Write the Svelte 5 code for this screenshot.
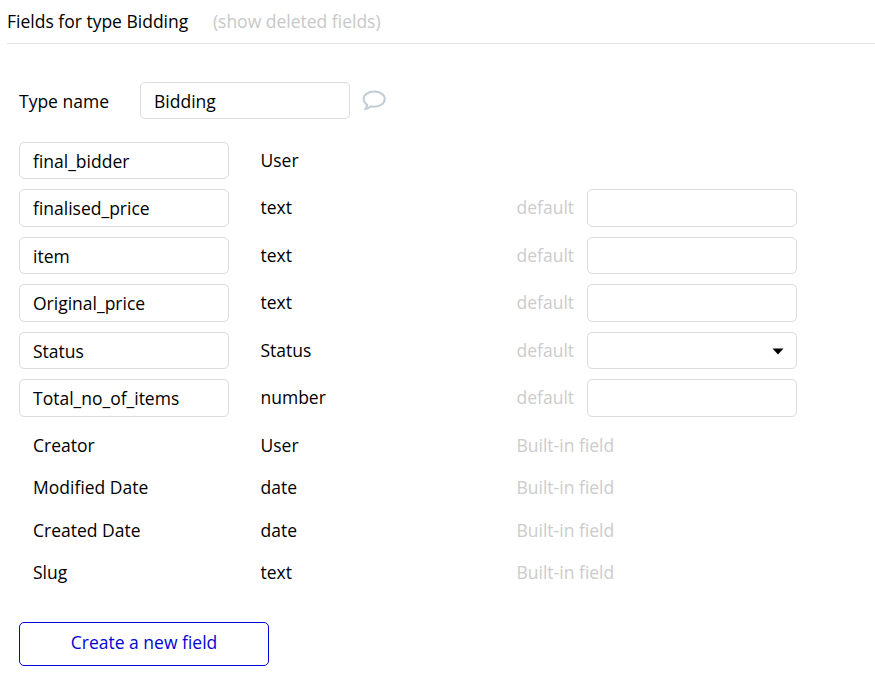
<script>
  const fields = [
    { name: 'final_bidder', type: 'User', control: 'none' },
    { name: 'finalised_price', type: 'text', control: 'text' },
    { name: 'item', type: 'text', control: 'text' },
    { name: 'Original_price', type: 'text', control: 'text' },
    { name: 'Status', type: 'Status', control: 'select' },
    { name: 'Total_no_of_items', type: 'number', control: 'text' }
  ];
  const builtIn = [
    { name: 'Creator', type: 'User' },
    { name: 'Modified Date', type: 'date' },
    { name: 'Created Date', type: 'date' },
    { name: 'Slug', type: 'text' }
  ];
</script>

<main>
  <header>
    <span class="title">Fields for type Bidding</span>
    <span class="muted">(show deleted fields)</span>
  </header>

  <div class="type-name">
    <span class="label">Type name</span>
    <div class="box">Bidding</div>
    <svg class="comment" width="24" height="21" viewBox="0 0 24 21" fill="none" stroke="#bfced6" stroke-width="2" stroke-linejoin="round">
      <path d="M12.200 1.500C6.300 1.500 1.700 4.700 1.700 9c0 2.400 1.400 4.400 3.600 5.800-.3 1.700-1.100 3.100-2.300 4.300 2.500-.2 4.400-1.200 6-2.800 1 .3 2.100.4 3.200.4 5.900 0 10.500-3.400 10.500-7.700S18.100 1.500 12.200 1.500Z" />
    </svg>
  </div>

  <div class="rows">
    {#each fields as field}
      <div class="row">
        <div class="box">{field.name}</div>
        <span class="type">{field.type}</span>
        {#if field.control !== 'none'}
          <span class="muted default">default</span>
          <div class="box value">
            {#if field.control === 'select'}
              <svg width="12" height="7" viewBox="0 0 12 7"><path d="M.5 .5h11L6 6.500Z" fill="#000" /></svg>
            {/if}
          </div>
        {/if}
      </div>
    {/each}
    {#each builtIn as field}
      <div class="row built-in">
        <span class="name">{field.name}</span>
        <span class="type">{field.type}</span>
        <span class="muted">Built-in field</span>
      </div>
    {/each}
  </div>

  <button>Create a new field</button>
</main>

<style>
  :global(body) { background: #fff; }
  main {
    box-sizing: border-box;
    width: 875px;
    height: 688px;
    overflow: hidden;
    font: 400 17.5px/24px 'Open Sans', 'Noto Sans', sans-serif;
    color: #000;
    white-space: nowrap;
  }
  header {
    box-sizing: border-box;
    display: flex;
    gap: 24.6px;
    height: 44px;
    margin-left: 7px;
    padding-top: 9px;
    border-bottom: 1px solid #e2e2e2;
  }
  .muted { color: #c8c8c8; }
  .row .muted { color: #ccc; }
  .box {
    box-sizing: border-box;
    display: flex;
    align-items: center;
    flex: none;
    width: 210px;
    height: 37.5px;
    padding: 1px 13px 0;
    border: 1px solid #dcdcdc;
    border-radius: 5px;
  }
  .type-name {
    display: flex;
    align-items: center;
    margin: 37.9px 0 0 19px;
    height: 37.5px;
  }
  .label { width: 121px; }
  .comment { margin: 0 0 1px 12px; }
  .rows { margin: 22.5px 0 0 19px; }
  .row { display: flex; height: 47.5px; line-height: 37px; }
  .type { width: 256px; margin-left: 31.5px; }
  .default { width: 70.5px; }
  .value { justify-content: flex-end; padding-right: 12px; }
  .built-in { height: 42.5px; }
  .name { width: 196px; padding-left: 14px; }
  button {
    display: block;
    box-sizing: border-box;
    width: 250px;
    height: 44px;
    margin: 25px 0 0 19px;
    padding: 0 0 3px;
    border: 1px solid #0205d3;
    border-radius: 5px;
    background: #fff;
    color: #0205d3;
    font: inherit;
  }
</style>
